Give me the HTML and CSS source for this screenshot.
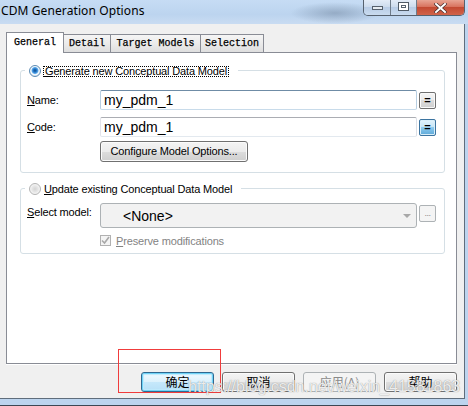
FILE: index.html
```html
<!DOCTYPE html>
<html>
<head>
<meta charset="utf-8">
<link rel="stylesheet" href="styles.css">
</head>
<body>
<div class="titlebar">
  <span class="title">CDM Generation Options</span>
  <div class="blob"></div>
  <div class="controls">
    <div class="cb min"><span class="min-glyph"></span></div>
    <div class="cb max"><span class="max-glyph"></span></div>
    <div class="cb close">
      <svg width="13" height="10" viewBox="0 0 13 10"><path d="M2 1 L11 9 M11 1 L2 9" stroke="#4a3030" stroke-width="3.4" stroke-linecap="square"/><path d="M2 1 L11 9 M11 1 L2 9" stroke="#ffffff" stroke-width="2" stroke-linecap="square"/></svg>
    </div>
  </div>
</div>
<div class="client">
  <div class="tabs">
    <div class="tab active w-general">General</div>
    <div class="tab w-detail">Detail</div>
    <div class="tab w-target">Target Models</div>
    <div class="tab w-selection">Selection</div>
  </div>
  <div class="panel">
    <div class="group g1">
      <div class="legend"><span class="radio on"></span><span class="focus"><u>G</u>enerate new Conceptual Data Model</span></div>
      <div class="row first"><span class="lbl"><u>N</u>ame:</span><div class="input hover">my_pdm_1</div><div class="eq">=</div></div>
      <div class="row"><span class="lbl"><u>C</u>ode:</span><div class="input">my_pdm_1</div><div class="eq blue">=</div></div>
      <div class="row btnrow"><div class="btn">Configure Model Options...</div></div>
    </div>
    <div class="group g2">
      <div class="legend"><span class="radio"></span><span class="ltext"><u>U</u>pdate existing Conceptual Data Model</span></div>
      <div class="row sel"><span class="lbl top"><u>S</u>elect model:</span><div class="combo"><span>&lt;None&gt;</span><span class="arrow"></span></div><div class="dots">...</div></div>
      <div class="row chk"><span class="check"><svg width="9" height="9" viewBox="0 0 9 9"><path d="M1 4.5 L3.5 7 L8 1" fill="none" stroke="#a8a8a8" stroke-width="1.6"/></svg></span><span class="dis"><u>P</u>reserve modifications</span></div>
    </div>
  </div>
  <div class="buttons">
    <div class="dbtn default">确定</div>
    <div class="dbtn">取消</div>
    <div class="dbtn disabled">应用(A)</div>
    <div class="dbtn">帮助</div>
  </div>
</div>
<div class="frame-gap"></div>
<div class="frame-line"></div>
<div class="annot"></div>
<div class="watermark">https://blog.csdn.net/weixin_41581863</div>
</body>
</html>
```
FILE: styles.css
```css
* { box-sizing: border-box; }
body {
  margin: 0;
  width: 468px;
  height: 406px;
  overflow: hidden;
  background: #bcd4ee;
  font-family: "Liberation Sans", Arial, sans-serif;
  font-size: 11px;
  letter-spacing: -0.15px;
  color: #000;
  display: flex;
  flex-direction: column;
  position: relative;
}
.titlebar {
  height: 24px;
  flex: none;
  position: relative;
  display: flex;
  align-items: flex-start;
  background: linear-gradient(#c6dcf4, #bcd4ef 60%, #c9dcf2);
}
.title {
  font-family: "Noto Sans", "Liberation Sans", sans-serif;
  font-size: 12px;
  letter-spacing: 0.1px;
  line-height: 16px;
  padding: 3px 0 0 1px;
  position: relative;
  z-index: 1;
}
.blob {
  position: absolute;
  left: 290px;
  top: 2px;
  width: 90px;
  height: 22px;
  background: radial-gradient(ellipse at center, rgba(90,110,135,0.4), rgba(90,110,135,0) 70%);
}
.controls {
  margin-left: auto;
  margin-right: 3px;
  display: flex;
  height: 16px;
  border: 1px solid #56616e;
  border-top: none;
  border-radius: 0 0 5px 5px;
  overflow: hidden;
  position: relative;
  z-index: 1;
}
.cb {
  height: 15px;
  display: flex;
  align-items: center;
  justify-content: center;
  background: linear-gradient(#e3ecf7, #cbdaec 50%, #b9cde6 50%, #c9dbef);
  border-right: 1px solid #6f7c8a;
}
.cb.min { width: 27px; }
.cb.max { width: 26px; }
.cb.close {
  width: 47px;
  border-right: none;
  background: linear-gradient(#e8a493, #d8735e 45%, #c34a32 50%, #d0634a);
}
.min-glyph {
  width: 11px;
  height: 4px;
  margin-top: 1px;
  background: #e6ecf2;
  border: 1px solid #56606c;
}
.max-glyph {
  width: 11px;
  height: 9px;
  margin-top: -3px;
  border: 1px solid #4f5a66;
  background: #fff;
  box-shadow: inset 0 2px 0 #fff, inset 0 0 0 2px #fff, inset 0 0 0 3px #56616e;
}
.client {
  width: 465px;
  height: 375px;
  flex: none;
  background: #f0f0f0;
  border-right: 1px solid #5f6d7c;
  border-bottom: 1px solid #5f6d7c;
  padding: 8px 7px 0 6px;
  display: flex;
  flex-direction: column;
}
.tabs {
  height: 20px;
  flex: none;
  display: flex;
  align-items: flex-end;
}
.tab {
  height: 18px;
  border: 1px solid #898c95;
  border-left: none;
  border-bottom: none;
  background: linear-gradient(#f5f5f5, #ebebeb 50%, #dedede);
  font-family: "Liberation Mono", monospace;
  font-size: 10px;
  letter-spacing: 0;
  line-height: 16px;
  padding-top: 1px;
  text-align: center;
  white-space: nowrap;
  -webkit-text-stroke: 0.25px #000;
}
.tab.active {
  height: 21px;
  margin-bottom: -1px;
  border-left: 1px solid #898c95;
  background: #fff;
  position: relative;
  z-index: 1;
  padding-top: 2px;
}
.w-general { width: 58px; }
.w-detail { width: 47px; }
.w-target { width: 90px; }
.w-selection { width: 63px; }
.panel {
  height: 312px;
  flex: none;
  border: 1px solid #898c95;
  background: #fff;
  padding: 17px 11px 0 13px;
  box-shadow: 0 1px 0 #fff;
}
.group {
  border: 1px solid #d5dfe5;
  border-radius: 3px;
  padding: 0 8px 10px 6px;
}
.group.g2 {
  margin-top: 15px;
  padding-bottom: 7px;
}
.legend {
  display: flex;
  align-items: center;
  height: 12px;
  margin: -6px 0 0 -2px;
  padding: 0 9px 0 4px;
  background: #fff;
  width: max-content;
}
.radio {
  width: 12px;
  height: 12px;
  border-radius: 50%;
  flex: none;
  border: 1px solid #b3b3b3;
  background: radial-gradient(circle at 50% 50%, #d4d4d4 0, #e6e6e6 3px, #f6f6f6 5px);
}
.radio.on {
  border-color: #5d8cb4;
  background: radial-gradient(circle at 50% 45%, #0e4f8c 0, #1f6fbf 1.5px, #59a8ea 3px, #c7e3fa 3.6px, #ffffff 4.2px, #dde7f1 5px);
}
.focus {
  margin-left: 2px;
  border: 1px dotted #000;
  padding: 0 1px;
  height: 11px;
  line-height: 9px;
  white-space: nowrap;
}
.ltext {
  margin-left: 3px;
  white-space: nowrap;
}
.row {
  display: flex;
  align-items: center;
  height: 20px;
  margin-top: 7px;
}
.row.first { margin-top: 13px; }
.lbl {
  width: 73px;
  flex: none;
  white-space: nowrap;
}
.lbl.top { align-self: flex-start; padding-top: 3px; }
.input {
  width: 317px;
  height: 20px;
  flex: none;
  border: 1px solid;
  border-color: #abadb3 #dbdfe6 #e3e9ef #e2e3ea;
  border-radius: 2px;
  font-size: 14px;
  letter-spacing: 0;
  padding-left: 3px;
  display: flex;
  align-items: center;
  background: #fff;
}
.input.hover {
  border-color: #6f8ca6 #b8cfe2 #c8dbea #b8cfe2;
}
.eq {
  width: 17px;
  height: 17px;
  flex: none;
  margin-left: 2px;
  border: 1px solid #707070;
  border-radius: 2px;
  background: linear-gradient(#f4f4f4, #ebebeb 50%, #dddddd 50%, #cfcfcf);
  box-shadow: inset 0 0 0 1px #fafafa;
  font-size: 11px;
  font-weight: bold;
  line-height: 14px;
  text-align: center;
}
.eq.blue {
  border-color: #3c74a0;
  background: linear-gradient(#e3f3fc, #c3e4f6 50%, #8ccaee 50%, #5ea9d9);
  box-shadow: inset 0 0 0 1px #d8eef9;
}
.row.btnrow {
  margin-top: 4px;
  height: 21px;
}
.btn {
  margin-left: 73px;
  width: 148px;
  height: 21px;
  border: 1px solid #707070;
  border-radius: 3px;
  background: linear-gradient(#f4f4f4, #ebebeb 50%, #dddddd 50%, #cfcfcf);
  box-shadow: inset 0 0 0 1px #fbfbfb;
  text-align: center;
  line-height: 19px;
  white-space: nowrap;
}
.row.sel {
  margin-top: 8px;
  height: 25px;
  align-items: flex-start;
}
.combo {
  width: 317px;
  height: 25px;
  flex: none;
  border: 1px solid #adb2b5;
  border-radius: 3px;
  background: #f2f2f2;
  font-size: 14px;
  letter-spacing: 0;
  padding: 0 5px 0 22px;
  display: flex;
  align-items: center;
}
.arrow {
  margin-left: auto;
  width: 0;
  height: 0;
  border-left: 4px solid transparent;
  border-right: 4px solid transparent;
  border-top: 4px solid #a8a8a8;
}
.dots {
  width: 17px;
  height: 17px;
  flex: none;
  margin: 2px 0 0 2px;
  border: 1px solid #adb2b5;
  border-radius: 2px;
  background: #f4f4f4;
  color: #8a8a8a;
  font-size: 9px;
  line-height: 15px;
  text-align: center;
  letter-spacing: -0.5px;
}
.row.chk {
  margin-top: 7px;
  height: 11px;
  padding-left: 73px;
}
.check {
  width: 11px;
  height: 11px;
  flex: none;
  border: 1px solid #b1b1b1;
  background: #f4f4f4;
  display: flex;
  align-items: center;
  justify-content: center;
}
.dis {
  margin-left: 5px;
  color: #838383;
  white-space: nowrap;
}
.buttons {
  display: flex;
  justify-content: flex-end;
  gap: 8px;
  margin-top: 8px;
  flex: none;
}
.dbtn {
  width: 73px;
  height: 20px;
  border: 1px solid #707070;
  border-radius: 3px;
  background: linear-gradient(#f4f4f4, #ebebeb 50%, #dddddd 50%, #cfcfcf);
  box-shadow: inset 0 0 0 1px #fbfbfb;
  font-family: "Noto Sans CJK SC", "Liberation Sans", sans-serif;
  font-size: 12px;
  letter-spacing: 0;
  line-height: 18px;
  text-align: center;
}
.dbtn.default {
  border-color: #2f6890;
  background: linear-gradient(#f2fafe, #dcf1fc 50%, #c6e8fb 50%, #b7e0f7);
  box-shadow: inset 0 0 0 1px #6fd3f7, inset 0 0 1px 2px #bfeafc;
}
.dbtn.disabled {
  border-color: #adb2b5;
  background: #f4f4f4;
  box-shadow: none;
  color: #8a8a8a;
}
.frame-gap {
  height: 6px;
  flex: none;
}
.frame-line {
  height: 1px;
  flex: none;
  background: #3c4753;
}
.annot {
  position: absolute;
  left: 118px;
  top: 349px;
  width: 103px;
  height: 44px;
  border: 1px solid #f03c3c;
}
.watermark {
  position: absolute;
  left: 188px;
  top: 378px;
  font-family: "Liberation Sans", Arial, sans-serif;
  font-size: 16px;
  letter-spacing: 0;
  line-height: 18px;
  color: rgba(255,255,255,0.85);
  text-shadow: 0 0 1px rgba(100,100,100,0.8);
  white-space: nowrap;
}
```
